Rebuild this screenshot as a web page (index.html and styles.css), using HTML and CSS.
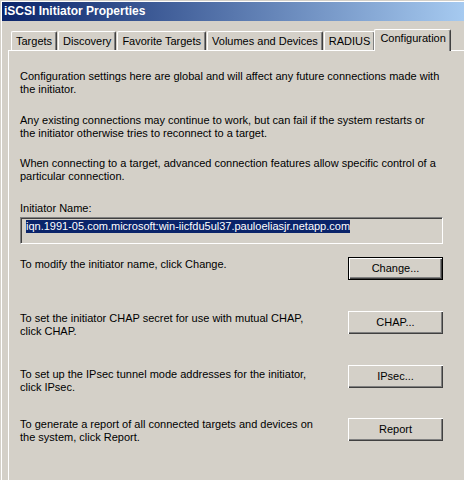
FILE: index.html
```html
<!DOCTYPE html>
<html>
<head>
<meta charset="utf-8">
<link rel="stylesheet" href="styles.css">
</head>
<body>
<div class="window">
  <div class="titlebar">iSCSI Initiator Properties</div>
  <div class="tabs">
    <div class="tab">Targets</div>
    <div class="tab">Discovery</div>
    <div class="tab">Favorite Targets</div>
    <div class="tab">Volumes and Devices</div>
    <div class="tab">RADIUS</div>
    <div class="tab tab-active">Configuration</div>
  </div>
  <div class="panel">
    <div class="content">
      <p class="para">Configuration settings here are global and will affect any future connections made with<br>the initiator.</p>
      <p class="para para-2">Any existing connections may continue to work, but can fail if the system restarts or<br>the initiator otherwise tries to reconnect to a target.</p>
      <p class="para para-3">When connecting to a target, advanced connection features allow specific control of a<br>particular connection.</p>
      <label class="label">Initiator Name:</label>
      <div class="field"><span class="selected">iqn.1991-05.com.microsoft:win-iicfdu5ul37.pauloeliasjr.netapp.com</span></div>
      <div class="row row-change">
        <p class="row-text">To modify the initiator name, click Change.</p>
        <button class="btn btn-default">Change...</button>
      </div>
      <div class="row">
        <p class="row-text">To set the initiator CHAP secret for use with mutual CHAP,<br>click CHAP.</p>
        <button class="btn">CHAP...</button>
      </div>
      <div class="row">
        <p class="row-text row-text-low">To set up the IPsec tunnel mode addresses for the initiator,<br>click IPsec.</p>
        <button class="btn">IPsec...</button>
      </div>
      <div class="row row-last">
        <p class="row-text row-text-high">To generate a report of all connected targets and devices on<br>the system, click Report.</p>
        <button class="btn">Report</button>
      </div>
    </div>
  </div>
</div>
</body>
</html>
```

FILE: styles.css
```css
* { box-sizing: border-box; }

html, body {
  margin: 0;
  padding: 0;
  width: 464px;
  height: 480px;
  overflow: hidden;
  background: #d4d0c8;
}

body {
  font-family: "Liberation Sans", Arial, sans-serif;
  font-size: 11px;
  line-height: 13px;
  color: #000;
}

.window {
  width: 464px;
  height: 480px;
  padding: 2px 0 0 2px;
  box-shadow: inset 1px 1px 0 #d4d0c8, inset 2px 2px 0 #ffffff;
  overflow: hidden;
}

.titlebar {
  height: 19px;
  line-height: 19px;
  padding-left: 2px;
  color: #fff;
  font-size: 12px;
  font-weight: bold;
  background: linear-gradient(to right, #0a246a, #a6caf0);
  white-space: nowrap;
}

.tabs {
  display: flex;
  align-items: flex-end;
  gap: 1px;
  padding-left: 9px;
  margin-top: 8px;
  height: 21px;
  position: relative;
  z-index: 1;
}

.tab {
  height: 19px;
  padding: 3px 4px 0 4px;
  border-top: 1px solid #fff;
  border-left: 1px solid #fff;
  border-right: 1px solid #404040;
  border-top-left-radius: 2px;
  border-top-right-radius: 2px;
  box-shadow: inset -1px 0 0 #808080;
  white-space: nowrap;
  background: #d4d0c8;
}

.tab-active {
  height: 22px;
  margin-left: -2px;
  margin-bottom: -1px;
  padding: 2px 4px 0 5px;
}

.panel {
  margin-left: 6px;
  height: 440px;
  border-top: 1px solid #fff;
  border-left: 1px solid #fff;
}

.content {
  width: 434px;
  padding: 19px 0 0 11px;
}

.para {
  margin: 0;
  white-space: nowrap;
}

.para-2 { margin-top: 18px; }
.para-3 { margin-top: 17px; }

.label {
  display: block;
  margin-top: 19px;
}

.field {
  margin-top: 2px;
  height: 27px;
  width: 423px;
  padding: 1px 0 0 4px;
  border-top: 1px solid #808080;
  border-left: 1px solid #808080;
  border-right: 1px solid #fff;
  border-bottom: 1px solid #fff;
  box-shadow: inset 1px 1px 0 #404040, inset -1px -1px 0 #d4d0c8;
  white-space: nowrap;
  overflow: hidden;
}

.selected {
  display: inline-block;
  margin-left: 1px;
  margin-top: 1px;
  background: #0a246a;
  color: #fff;
  height: 13px;
}

.row {
  display: flex;
  justify-content: space-between;
  align-items: flex-start;
  width: 423px;
  height: 23px;
  margin-top: 31px;
}

.row-change { margin-top: 13px; }
.row-last { margin-top: 30px; }

.row-text {
  margin: 0;
  padding-top: 1px;
  white-space: nowrap;
}

.row-text-low { padding-top: 3px; }
.row-text-high { padding-top: 0; }

.btn {
  flex: none;
  width: 95px;
  height: 23px;
  padding: 0;
  margin: 0;
  font: inherit;
  color: #000;
  background: #d4d0c8;
  border: none;
  box-shadow: inset 1px 1px 0 #fff, inset -1px -1px 0 #404040, inset -2px -2px 0 #808080;
}

.btn-default {
  border: 1px solid #000;
}
```
